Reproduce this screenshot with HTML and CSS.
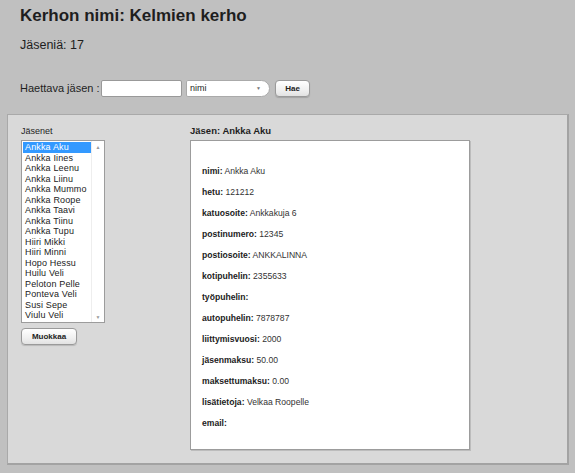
FILE: index.html
```html
<!DOCTYPE html>
<html lang="fi">
<head>
<meta charset="utf-8">
<title>Kerho</title>
<link rel="stylesheet" href="styles.css">
</head>
<body>
<header class="top">
  <h1 class="title">Kerhon nimi: Kelmien kerho</h1>
  <p class="count">Jäseniä: 17</p>
  <form class="search">
    <label class="search-label">Haettava jäsen :</label>
    <span class="text-input"></span>
    <span class="select">nimi<span class="caret">▼</span></span>
    <span class="btn btn-hae">Hae</span>
  </form>
</header>
<main class="panel">
  <section class="members">
    <div class="label">Jäsenet</div>
    <div class="listbox">
      <ul class="items">
        <li class="sel">Ankka Aku</li>
        <li>Ankka Iines</li>
        <li>Ankka Leenu</li>
        <li>Ankka Liinu</li>
        <li>Ankka Mummo</li>
        <li>Ankka Roope</li>
        <li>Ankka Taavi</li>
        <li>Ankka Tiinu</li>
        <li>Ankka Tupu</li>
        <li>Hiiri Mikki</li>
        <li>Hiiri Minni</li>
        <li>Hopo Hessu</li>
        <li>Huilu Veli</li>
        <li>Peloton Pelle</li>
        <li>Ponteva Veli</li>
        <li>Susi Sepe</li>
        <li>Viulu Veli</li>
      </ul>
      <div class="scroll">
        <span class="arrow">▲</span>
        <span class="arrow">▼</span>
      </div>
    </div>
    <span class="btn btn-edit">Muokkaa</span>
  </section>
  <section class="details">
    <div class="label bold">Jäsen: Ankka Aku</div>
    <div class="card">
      <p><b>nimi:</b> Ankka Aku</p>
      <p><b>hetu:</b> 121212</p>
      <p><b>katuosoite:</b> Ankkakuja 6</p>
      <p><b>postinumero:</b> 12345</p>
      <p><b>postiosoite:</b> ANKKALINNA</p>
      <p><b>kotipuhelin:</b> 2355633</p>
      <p><b>työpuhelin:</b></p>
      <p><b>autopuhelin:</b> 7878787</p>
      <p><b>liittymisvuosi:</b> 2000</p>
      <p><b>jäsenmaksu:</b> 50.00</p>
      <p><b>maksettumaksu:</b> 0.00</p>
      <p><b>lisätietoja:</b> Velkaa Roopelle</p>
      <p><b>email:</b></p>
    </div>
  </section>
</main>
</body>
</html>
```
FILE: styles.css
```css
* { box-sizing: border-box; }
html, body {
  margin: 0;
  padding: 0;
  background: #c0c0c0;
  font-family: "Liberation Sans", Arial, sans-serif;
  color: #1e1e1e;
}
body { width: 575px; height: 473px; overflow: hidden; }

.top { padding: 5px 0 0 20px; height: 114px; }
.title {
  margin: 0;
  font-size: 17px;
  line-height: 22px;
  font-weight: bold;
}
.count {
  margin: 10px 0 0;
  font-size: 12.5px;
  line-height: 16px;
}
.search {
  display: flex;
  align-items: center;
  margin-top: 26px;
  height: 18px;
}
.search-label { font-size: 11px; width: 81px; }
.text-input {
  width: 81px;
  height: 17px;
  background: #fff;
  border: 1px solid #999;
  border-radius: 2px;
  margin-right: 4px;
}
.select {
  position: relative;
  width: 84px;
  height: 17px;
  background: #fff;
  border: 1px solid #aaa;
  border-radius: 2px 9px 9px 2px;
  font-size: 9px;
  line-height: 15px;
  padding-left: 3px;
  margin-right: 5px;
}
.caret {
  position: absolute;
  right: 8px;
  top: 0;
  font-size: 5px;
  color: #777;
  line-height: 15px;
}
.btn {
  display: inline-flex;
  align-items: center;
  justify-content: center;
  height: 17px;
  background: linear-gradient(#ffffff, #f0f0f0 60%, #e2e2e2);
  border: 1px solid #9a9a9a;
  border-radius: 4px;
  font-size: 8px;
  font-weight: bold;
  color: #222;
  box-shadow: 0 1px 1px rgba(0,0,0,0.15);
}
.btn-hae { width: 35px; }

.panel {
  margin-left: 7px;
  width: 562px;
  height: 351px;
  background: #d9d9d9;
  border: 1px solid #a9a9a9;
  border-right: 2px solid #a3a3a3;
  border-bottom: 2px solid #a3a3a3;
  display: flex;
  padding: 9px 0 0 13px;
}
.label {
  font-size: 9px;
  line-height: 14px;
  height: 16px;
}
.bold { font-weight: bold; font-size: 9.5px; }
.members { width: 169px; }
.listbox {
  width: 84px;
  height: 183px;
  background: #fff;
  border: 1px solid #9c9c9c;
  display: flex;
}
.items {
  list-style: none;
  margin: 0;
  padding: 1px 0 0 1px;
  flex: 1;
  font-size: 9px;
  line-height: 10.5px;
  letter-spacing: 0.15px;
}
.items li {
  padding-left: 2px;
  color: #222;
  white-space: nowrap;
}
.items li.sel { background: #3399ff; color: #fff; }
.scroll {
  width: 13px;
  display: flex;
  flex-direction: column;
  justify-content: space-between;
  align-items: center;
  padding: 3px 0 2px;
  border-left: 1px solid #eee;
}
.arrow { font-size: 5px; color: #999; line-height: 6px; }
.btn-edit { width: 56px; height: 17px; margin-top: 5px; }

.details { width: 280px; }
.card {
  width: 280px;
  height: 310px;
  background: #fff;
  border: 1px solid #9c9c9c;
  box-shadow: 1px 1px 0 #bcbcbc;
  padding: 24px 0 0 11px;
  font-size: 8.6px;
}
.card p {
  margin: 0;
  height: 21px;
  line-height: 12px;
  color: #333;
}
.card b { color: #222; }
```
